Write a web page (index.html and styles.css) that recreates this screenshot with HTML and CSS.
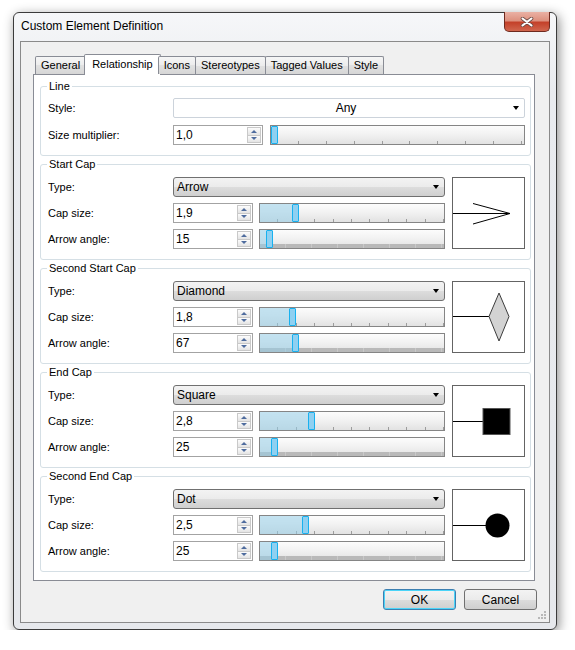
FILE: index.html
```html
<!DOCTYPE html>
<html lang="en">
<head>
    <meta charset="UTF-8">
    <title>Custom Element Definition</title>
    <link rel="stylesheet" href="styles.css">
</head>
<body>
    <div class="window">
        <div class="titlebar">
            <span class="title">Custom Element Definition</span>
            <div class="close">
                <svg width="14" height="10" viewBox="0 0 14 10">
                    <path d="M2.5 1.5 L11.5 8.5 M11.5 1.5 L2.5 8.5" stroke="#6b4a44" stroke-width="3.6" stroke-linecap="round"/>
                    <path d="M2.5 1.5 L11.5 8.5 M11.5 1.5 L2.5 8.5" stroke="#fff" stroke-width="2.1" stroke-linecap="round"/>
                </svg>
            </div>
        </div>
        <div class="client">
            <div class="tabs">
                <div class="tab">General</div>
                <div class="tab active">Relationship</div>
                <div class="tab">Icons</div>
                <div class="tab">Stereotypes</div>
                <div class="tab">Tagged Values</div>
                <div class="tab">Style</div>
            </div>
            <div class="panel">
                <fieldset class="group line_group">
                    <legend>Line</legend>
                    <div class="row">
                        <span class="label">Style:</span>
                        <div class="combo combo_flat"><span class="combo_text">Any</span><span class="arrow"></span></div>
                    </div>
                    <div class="row">
                        <span class="label">Size multiplier:</span>
                        <div class="spin spin_wide"><span class="spin_value">1,0</span><div class="spin_btns"><span class="up"></span><span class="down"></span></div></div>
                        <div class="slider slider_wide"><div class="fill" style="width:0px"></div><div class="thumb"></div></div>
                    </div>
                </fieldset>

                <fieldset class="group">
                    <legend>Start Cap</legend>
                    <div class="cap_body">
                        <div class="cap_rows">
                            <div class="row">
                                <span class="label">Type:</span>
                                <div class="combo"><span class="combo_text">Arrow</span><span class="arrow"></span></div>
                            </div>
                            <div class="row">
                                <span class="label">Cap size:</span>
                                <div class="spin"><span class="spin_value">1,9</span><div class="spin_btns"><span class="up"></span><span class="down"></span></div></div>
                                <div class="slider"><div class="fill" style="width:32px"></div><div class="thumb"></div></div>
                            </div>
                            <div class="row">
                                <span class="label">Arrow angle:</span>
                                <div class="spin"><span class="spin_value">15</span><div class="spin_btns"><span class="up"></span><span class="down"></span></div></div>
                                <div class="slider slider_band"><div class="fill" style="width:6px"></div><div class="thumb"></div></div>
                            </div>
                        </div>
                        <div class="preview">
                            <svg width="71" height="70" viewBox="0 0 71 70">
                                <path d="M0 35.5 H57 M20 25.5 L57 35.5 L20 46" stroke="#000" stroke-width="1" fill="none"/>
                            </svg>
                        </div>
                    </div>
                </fieldset>

                <fieldset class="group">
                    <legend>Second Start Cap</legend>
                    <div class="cap_body">
                        <div class="cap_rows">
                            <div class="row">
                                <span class="label">Type:</span>
                                <div class="combo"><span class="combo_text">Diamond</span><span class="arrow"></span></div>
                            </div>
                            <div class="row">
                                <span class="label">Cap size:</span>
                                <div class="spin"><span class="spin_value">1,8</span><div class="spin_btns"><span class="up"></span><span class="down"></span></div></div>
                                <div class="slider"><div class="fill" style="width:29px"></div><div class="thumb"></div></div>
                            </div>
                            <div class="row">
                                <span class="label">Arrow angle:</span>
                                <div class="spin"><span class="spin_value">67</span><div class="spin_btns"><span class="up"></span><span class="down"></span></div></div>
                                <div class="slider slider_band"><div class="fill" style="width:32px"></div><div class="thumb"></div></div>
                            </div>
                        </div>
                        <div class="preview">
                            <svg width="71" height="70" viewBox="0 0 71 70">
                                <path d="M0 34.5 H36" stroke="#000" stroke-width="1"/>
                                <path d="M36 34.5 L46 11 L56 34.5 L46 59 Z" fill="#d3d3d3" stroke="#3c3c3c" stroke-width="1"/>
                            </svg>
                        </div>
                    </div>
                </fieldset>

                <fieldset class="group">
                    <legend>End Cap</legend>
                    <div class="cap_body">
                        <div class="cap_rows">
                            <div class="row">
                                <span class="label">Type:</span>
                                <div class="combo"><span class="combo_text">Square</span><span class="arrow"></span></div>
                            </div>
                            <div class="row">
                                <span class="label">Cap size:</span>
                                <div class="spin"><span class="spin_value">2,8</span><div class="spin_btns"><span class="up"></span><span class="down"></span></div></div>
                                <div class="slider"><div class="fill" style="width:48px"></div><div class="thumb"></div></div>
                            </div>
                            <div class="row">
                                <span class="label">Arrow angle:</span>
                                <div class="spin"><span class="spin_value">25</span><div class="spin_btns"><span class="up"></span><span class="down"></span></div></div>
                                <div class="slider slider_band"><div class="fill" style="width:11px"></div><div class="thumb"></div></div>
                            </div>
                        </div>
                        <div class="preview">
                            <svg width="71" height="70" viewBox="0 0 71 70">
                                <path d="M0 35.5 H30" stroke="#000" stroke-width="1"/>
                                <rect x="30" y="22.5" width="27" height="26" fill="#000" stroke="#555" stroke-width="1"/>
                            </svg>
                        </div>
                    </div>
                </fieldset>

                <fieldset class="group">
                    <legend>Second End Cap</legend>
                    <div class="cap_body">
                        <div class="cap_rows">
                            <div class="row">
                                <span class="label">Type:</span>
                                <div class="combo"><span class="combo_text">Dot</span><span class="arrow"></span></div>
                            </div>
                            <div class="row">
                                <span class="label">Cap size:</span>
                                <div class="spin"><span class="spin_value">2,5</span><div class="spin_btns"><span class="up"></span><span class="down"></span></div></div>
                                <div class="slider"><div class="fill" style="width:42px"></div><div class="thumb"></div></div>
                            </div>
                            <div class="row">
                                <span class="label">Arrow angle:</span>
                                <div class="spin"><span class="spin_value">25</span><div class="spin_btns"><span class="up"></span><span class="down"></span></div></div>
                                <div class="slider slider_band"><div class="fill" style="width:11px"></div><div class="thumb"></div></div>
                            </div>
                        </div>
                        <div class="preview">
                            <svg width="71" height="70" viewBox="0 0 71 70">
                                <path d="M0 35.5 H33" stroke="#000" stroke-width="1"/>
                                <circle cx="44.5" cy="35.5" r="12" fill="#000"/>
                            </svg>
                        </div>
                    </div>
                </fieldset>
            </div>
            <div class="buttons">
                <button class="btn btn_default">OK</button>
                <button class="btn">Cancel</button>
            </div>
            <svg class="grip" width="8" height="8" viewBox="0 0 8 8">
                <rect x="6" y="0" width="2" height="2" fill="#b8b8b8"/>
                <rect x="3" y="3" width="2" height="2" fill="#b8b8b8"/>
                <rect x="6" y="3" width="2" height="2" fill="#b8b8b8"/>
                <rect x="0" y="6" width="2" height="2" fill="#b8b8b8"/>
                <rect x="3" y="6" width="2" height="2" fill="#b8b8b8"/>
                <rect x="6" y="6" width="2" height="2" fill="#b8b8b8"/>
            </svg>
        </div>
    </div>
</body>
</html>
```

FILE: styles.css
```css
* {
    box-sizing: border-box;
}
body {
    margin: 0;
    background: #fff;
    font-family: "Liberation Sans", Arial, sans-serif;
    font-size: 11px;
    color: #000;
}
.window {
    display: flex;
    flex-direction: column;
    width: 544px;
    height: 618px;
    margin: 12px 0 0 13px;
    padding: 0 6px 6px;
    border: 1px solid #3b3b3b;
    border-radius: 6px;
    background: linear-gradient(#f6f7f9, #e9ebef 80px, #e6e8ec);
    box-shadow: 2px 3px 12px rgba(0, 0, 0, .45);
}
.titlebar {
    display: flex;
    justify-content: space-between;
    align-items: flex-start;
    height: 28px;
}
.title {
    padding: 6px 0 0 1px;
    font-size: 12px;
    line-height: 15px;
}
.close {
    display: flex;
    align-items: center;
    justify-content: center;
    width: 46px;
    height: 20px;
    margin-top: -1px;
    border: 1px solid #6e2a1f;
    border-top: none;
    border-radius: 0 0 5px 5px;
    background: linear-gradient(#eab1a4, #dd917f 45%, #c4412a 55%, #d0664e);
}

/* client area */
.client {
    position: relative;
    height: 582px;
    padding: 12px 0 0 12px;
    border: 1px solid #8a8a8a;
    background: #f0f0f0;
}
.tabs {
    position: relative;
    z-index: 1;
    display: flex;
    align-items: flex-end;
    height: 21px;
    margin: 0 0 -1px 2px;
}
.tab {
    height: 18px;
    margin: 0 0 1px -1px;
    padding: 0 5px;
    border: 1px solid #898c95;
    border-bottom: none;
    border-radius: 2px 2px 0 0;
    background: linear-gradient(#f6f6f6, #ececec 50%, #e1e1e1 50%, #d6d6d6);
    line-height: 17px;
}
.tab:first-child {
    margin-left: 0;
}
.tab.active {
    height: 21px;
    margin: 0 -2px 0 -2px;
    padding: 0 7px;
    background: #fff;
    line-height: 18px;
}
.panel {
    width: 502px;
    height: 507px;
    padding: 4px 0 0 6px;
    border: 1px solid #898c95;
    background: #fff;
}

/* group boxes */
.group {
    width: 491px;
    margin: 0 0 1px;
    padding: 6px 5px 10px 7px;
    border: 1px solid #d5dfe5;
    border-radius: 3px;
}
.group legend {
    margin-left: -1px;
    padding: 0 2px;
    line-height: 14px;
}
.line_group {
    padding-top: 5px;
}
.line_group .row + .row {
    margin-top: 7px;
}
.cap_body {
    display: flex;
    justify-content: space-between;
}
.cap_rows {
    display: flex;
    flex-direction: column;
    gap: 6px;
    width: 397px;
}
.row {
    display: flex;
    align-items: center;
    height: 20px;
}
.label {
    flex: none;
    width: 125px;
}
.preview {
    width: 73px;
    height: 72px;
    border: 1px solid #646464;
    background: #fff;
}
.preview svg {
    display: block;
}

/* combo boxes */
.combo {
    display: flex;
    align-items: center;
    flex: 1;
    height: 20px;
    padding-left: 3px;
    border: 1px solid #707070;
    border-radius: 3px;
    background: linear-gradient(#f3f3f3, #ebebeb 50%, #dddddd 50%, #cfcfcf);
    font-size: 12px;
}
.combo_text {
    flex: 1;
}
.arrow {
    width: 0;
    height: 0;
    margin-right: 5px;
    border-left: 3.5px solid transparent;
    border-right: 3.5px solid transparent;
    border-top: 4px solid #000;
}
.combo_flat {
    border-color: #ccd3db;
    border-radius: 2px;
    background: #fff;
}
.combo_flat .combo_text {
    text-align: center;
    padding-left: 2px;
}

/* spin edits */
.spin {
    display: flex;
    flex: none;
    width: 80px;
    height: 20px;
    margin-right: 6px;
    border: 1px solid #a3a3a3;
    background: #fff;
}
.spin_wide {
    width: 90px;
    margin-right: 7px;
}
.spin_value {
    flex: 1;
    padding-left: 2px;
    font-size: 12px;
    line-height: 18px;
}
.spin_btns {
    display: flex;
    flex-direction: column;
    width: 14px;
    margin: 1px 1px 1px 0;
}
.spin_btns span {
    display: flex;
    align-items: center;
    justify-content: center;
    flex: 1;
    border: 1px solid #c9c9c9;
    background: linear-gradient(#fcfcfc, #e4e4e4);
}
.spin_btns span + span {
    margin-top: -1px;
}
.spin_btns .up::before,
.spin_btns .down::before {
    content: "";
    border-left: 3px solid transparent;
    border-right: 3px solid transparent;
}
.spin_btns .up::before {
    border-bottom: 3px solid #4f6c9e;
}
.spin_btns .down::before {
    border-top: 3px solid #4f6c9e;
}

/* track bars */
.slider {
    display: flex;
    flex: none;
    width: 186px;
    height: 20px;
    border: 1px solid #858585;
    background:
        repeating-linear-gradient(90deg, transparent 0 17.4px, #9c9c9c 17.4px 18.4px) left bottom / 100% 3px no-repeat,
        linear-gradient(#fcfcfc, #f1f1f1 50%, #e2e2e2);
}
.slider_wide {
    flex: 1;
    background:
        repeating-linear-gradient(90deg, transparent 0 26.9px, #9c9c9c 26.9px 27.9px) left bottom / 100% 3px no-repeat,
        linear-gradient(#fcfcfc, #f1f1f1 50%, #e2e2e2);
}
.slider_band {
    background:
        repeating-linear-gradient(90deg, #b9b9b9 0 25px, #c9c9c9 25px 26px) left bottom / 100% 4px no-repeat,
        linear-gradient(#fcfcfc, #f1f1f1 50%, #e2e2e2);
}
.fill {
    height: 100%;
    background: rgba(150, 205, 232, .55);
}
.thumb {
    width: 7px;
    height: 100%;
    border: 1px solid #18b1ef;
    border-radius: 1px;
    background: #8fd0f1;
}

/* dialog buttons */
.buttons {
    display: flex;
    justify-content: flex-end;
    gap: 8px;
    width: 504px;
    margin-top: 8px;
}
.btn {
    width: 73px;
    height: 21px;
    padding: 0;
    border: 1px solid #707070;
    border-radius: 3px;
    background: linear-gradient(#f3f3f3, #ebebeb 50%, #dddddd 50%, #cfcfcf);
    font-family: "Liberation Sans", Arial, sans-serif;
    font-size: 12px;
    color: #000;
}
.btn_default {
    border-color: #3c7fb1;
    box-shadow: inset 0 0 0 1px #4bd4f8;
}
.grip {
    position: absolute;
    right: 3px;
    bottom: 3px;
}
```
